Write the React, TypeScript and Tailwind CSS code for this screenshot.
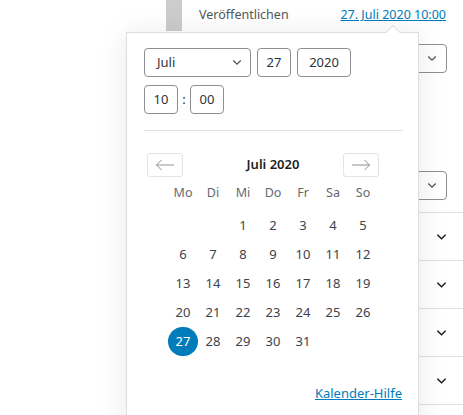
import React from 'react';

const font = { fontFamily: '"Noto Sans", "Open Sans", sans-serif' };

const Chevron = ({ className = '' }: { className?: string }) => (
  <svg viewBox="0 0 12 8" className={className} fill="none" stroke="currentColor" strokeWidth="1.6">
    <path d="M1.5 1.5 6 6l4.5-4.5" />
  </svg>
);

const NavArrow = ({ dir }: { dir: 'left' | 'right' }) => (
  <svg viewBox="0 0 20 12" className="w-[20px] h-[12px]" fill="none" stroke="#8c8f94" strokeWidth="1">
    {dir === 'left' ? <path d="M19 6H1.5M6.5 1 1.5 6l5 5" /> : <path d="M1 6h17.5M13.5 1l5 5-5 5" />}
  </svg>
);

const weeks: (number | null)[][] = [
  [null, null, 1, 2, 3, 4, 5],
  [6, 7, 8, 9, 10, 11, 12],
  [13, 14, 15, 16, 17, 18, 19],
  [20, 21, 22, 23, 24, 25, 26],
  [27, 28, 29, 30, 31, null, null],
];

const days = ['Mo', 'Di', 'Mi', 'Do', 'Fr', 'Sa', 'So'];

const Field = ({ value, w }: { value: string; w: string }) => (
  <div className={`${w} h-[29px] rounded-[4px] border border-[#8c8f94] flex items-center justify-center text-[13px] text-[#2c3338]`}>
    {value}
  </div>
);

export default function App() {
  return (
    <div className="relative w-[463px] h-[415px] overflow-hidden bg-white" style={font}>
      {/* background page */}
      <div className="flex h-full">
        <div className="w-[166px] shrink-0" />
        <div className="w-[16px] h-[31px] shrink-0 bg-[#cccccc]" />
        <div className="flex-1 flex flex-col">
          <div className="h-[31px] shrink-0 flex items-center justify-between pl-[17px] pr-[17px] text-[12.5px]">
            <span className="text-[#50575e]">Veröffentlichen</span>
            <a className="text-[#007cba] underline">27. Juli 2020 10:00</a>
          </div>
          <div className="shrink-0 flex justify-end pr-[16px] mt-[13px]">
            <div className="w-[200px] h-[29px] rounded-[4px] border border-[#8c8f94] flex items-center justify-end pr-[9px] text-[#50575e]">
              <Chevron className="w-[10px] h-[7px]" />
            </div>
          </div>
          <div className="shrink-0 flex justify-end pr-[16px] mt-[98px]">
            <div className="w-[200px] h-[29px] rounded-[4px] border border-[#8c8f94] flex items-center justify-end pr-[9px] text-[#50575e]">
              <Chevron className="w-[10px] h-[7px]" />
            </div>
          </div>
          <div className="shrink-0 mt-[12px] flex flex-col">
            {[0, 1, 2, 3, 4].map((i) => (
              <div key={i} className="h-[48px] shrink-0 border-t border-[#e0e0e0] flex items-center justify-end pr-[16px] text-[#1e1e1e]">
                <Chevron className="w-[11px] h-[8px]" />
              </div>
            ))}
          </div>
        </div>
      </div>

      {/* popover */}
      <div className="absolute left-[126px] top-[32px] w-[293px] h-[400px] bg-white border border-[#dddddd] shadow-[0_2px_28px_rgba(0,0,0,0.09)]">
        <div className="absolute -top-[6px] left-[261px] w-[10px] h-[10px] bg-white border-l border-t border-[#dddddd] rotate-45" />
        <div className="relative pl-[17px] pr-[15px] pt-[15px]">
          <div className="flex gap-[6px]">
            <div className="w-[107px] h-[29px] rounded-[4px] border border-[#8c8f94] flex items-center justify-between pl-[12px] pr-[8px] text-[13px] text-[#2c3338]">
              <span>Juli</span>
              <Chevron className="w-[10px] h-[7px] text-[#50575e]" />
            </div>
            <Field value="27" w="w-[34px]" />
            <Field value="2020" w="w-[54px]" />
          </div>
          <div className="flex items-center mt-[8px]">
            <Field value="10" w="w-[34px]" />
            <span className="w-[12px] text-center text-[13px] text-[#2c3338]">:</span>
            <Field value="00" w="w-[34px]" />
          </div>
          <div className="h-px bg-[#e0e0e0] mt-[16px]" />

          <div className="ml-[3px] w-[232px] mt-[22px]">
            <div className="flex items-center h-[24px]">
              <div className="w-[36px] h-[24px] rounded-[3px] border border-[#e4e4e4] flex items-center justify-center">
                <NavArrow dir="left" />
              </div>
              <div className="flex-1 pl-[20px] text-center text-[13px] font-semibold text-[#1e1e1e]">Juli 2020</div>
              <div className="w-[36px] h-[24px] rounded-[3px] border border-[#e4e4e4] flex items-center justify-center">
                <NavArrow dir="right" />
              </div>
            </div>
          </div>
          <div className="ml-[24px] w-[210px]">
            <div className="grid grid-cols-7 mt-[7px] h-[18px] items-center">
              {days.map((d) => (
                <div key={d} className="text-center text-[12.5px] text-[#646970]">{d}</div>
              ))}
            </div>
            <div className="mt-[9px] flex flex-col">
              {weeks.map((w, i) => (
                <div key={i} className="grid grid-cols-7 h-[29px]">
                  {w.map((d, j) => (
                    <div key={j} className="flex items-center justify-center">
                      {d === 27 ? (
                        <div className="w-[30px] h-[29px] rounded-full bg-[#007cba] text-white flex items-center justify-center text-[13px]">27</div>
                      ) : (
                        <span className="text-[13px] text-[#3c434a]">{d ?? ''}</span>
                      )}
                    </div>
                  ))}
                </div>
              ))}
            </div>
          </div>
          <div className="flex justify-end mt-[28px] pr-[1px]">
            <a className="text-[13px] text-[#007cba] underline">Kalender-Hilfe</a>
          </div>
        </div>
      </div>
    </div>
  );
}
